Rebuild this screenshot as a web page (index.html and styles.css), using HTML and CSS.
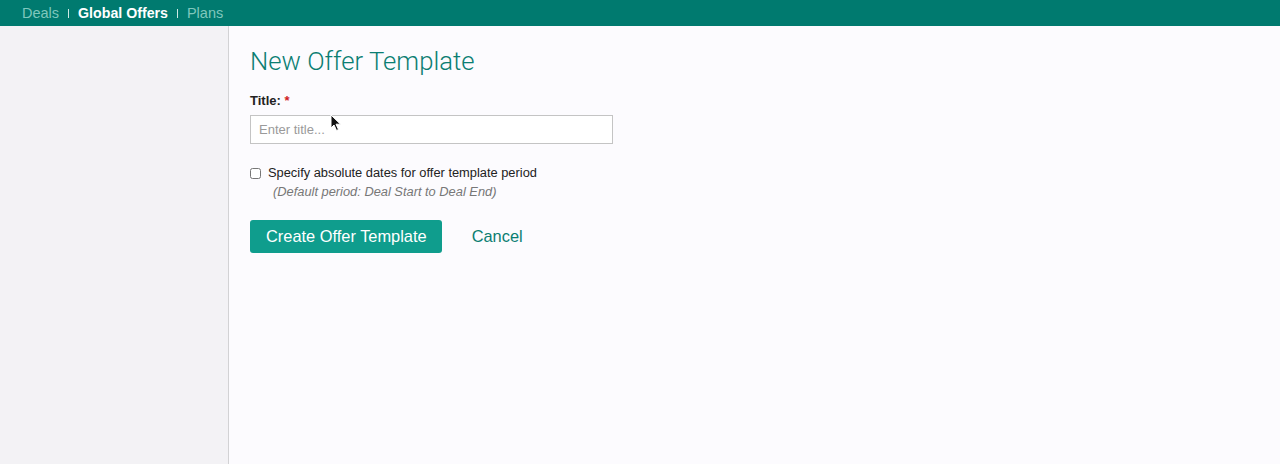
FILE: index.html
```html
<!DOCTYPE html>
<html lang="en">

<head>
    <meta charset="UTF-8">
    <meta name="viewport" content="width=device-width, initial-scale=1.0">
    <title>New Offer Template</title>
    <link rel="stylesheet" href="styles.css">
</head>

<body>
    <nav class="topbar">
        <a href="#" class="nav-link">Deals</a>
        <span class="nav-sep"></span>
        <a href="#" class="nav-link active">Global Offers</a>
        <span class="nav-sep"></span>
        <a href="#" class="nav-link">Plans</a>
    </nav>

    <div class="layout">
        <aside class="sidebar"></aside>

        <main class="content">
            <h1>New Offer Template</h1>
            <form class="offer-form">
                <label class="field-label" for="title">Title: <span class="required">*</span></label>
                <input type="text" id="title" class="text-input" placeholder="Enter title...">

                <div class="check-row">
                    <input type="checkbox" id="absoluteDates" class="checkbox">
                    <label for="absoluteDates">Specify absolute dates for offer template period</label>
                </div>
                <p class="hint">(Default period: Deal Start to Deal End)</p>

                <div class="actions">
                    <button type="submit" class="btn-primary">Create Offer Template</button>
                    <a href="#" class="btn-link">Cancel</a>
                </div>
            </form>

            <!-- mouse pointer from the capture -->
            <svg class="cursor" width="12" height="18" viewBox="0 0 12 18">
                <path d="M1 1 L1 14 L4 11 L6.5 16.5 L8.5 15.5 L6 10.2 L10.5 10.2 Z" fill="#111" stroke="#fff" stroke-width="1"/>
            </svg>
        </main>
    </div>
</body>

</html>
```

FILE: styles.css
```css
body {
    margin: 0;
    font-family: "Liberation Sans", Arial, sans-serif;
    background-color: #fcfbfe;
    color: #222;
}

.topbar {
    height: 26px;
    background-color: #007a6f;
    display: flex;
    align-items: center;
    padding-left: 22px;
    gap: 9px;
    box-sizing: border-box;
}

.nav-link {
    color: #7fc7bd;
    text-decoration: none;
    font-size: 14.5px;
    line-height: 26px;
}

.nav-link.active {
    color: #fff;
    font-weight: bold;
    font-size: 14.2px;
}

.nav-sep {
    width: 1px;
    height: 9px;
    background-color: #cfe9e5;
    margin-top: 1px;
}

.layout {
    display: flex;
    min-height: 438px;
}

.sidebar {
    width: 228px;
    background-color: #f3f2f5;
    border-right: 1px solid #d2d2d4;
    flex-shrink: 0;
}

.content {
    position: relative;
    flex: 1;
    padding: 20px 21px;
}

h1 {
    margin: 0 0 17px;
    font-family: Roboto, "Liberation Sans", sans-serif;
    font-weight: 300;
    font-size: 25.7px;
    line-height: 30px;
    color: #0b7e72;
}

.offer-form {
    display: flex;
    flex-direction: column;
}

.field-label {
    font-size: 13px;
    font-weight: bold;
    color: #222;
    line-height: 16px;
    margin-bottom: 6px;
}

.required {
    color: #d0201b;
}

.text-input {
    width: 363px;
    height: 29px;
    box-sizing: border-box;
    border: 1px solid #c4c4c4;
    padding: 0 8px;
    font-family: inherit;
    font-size: 13px;
    background: #fff;
    color: #333;
}

.text-input::placeholder {
    color: #9a9a9a;
}

.check-row {
    display: flex;
    align-items: center;
    margin-top: 21px;
    font-size: 12.85px;
    line-height: 16px;
    color: #222;
}

.checkbox {
    width: 11px;
    height: 11px;
    margin: 0 7px 0 0;
}

.hint {
    margin: 3px 0 0 23px;
    font-size: 12.85px;
    font-style: italic;
    color: #777;
    line-height: 16px;
}

.actions {
    display: flex;
    align-items: center;
    gap: 30px;
    margin-top: 20px;
}

.btn-primary {
    height: 33px;
    padding: 0 15px 0 16px;
    background-color: #0f9d8d;
    color: #fff;
    border: none;
    border-radius: 3px;
    font-family: inherit;
    font-size: 16.4px;
    cursor: pointer;
}

.btn-primary:hover {
    background-color: #0b8a7c;
}

.btn-link {
    color: #0b7e72;
    font-size: 16.4px;
    text-decoration: none;
}

.cursor {
    position: absolute;
    left: 101px;
    top: 88px;
}
```
